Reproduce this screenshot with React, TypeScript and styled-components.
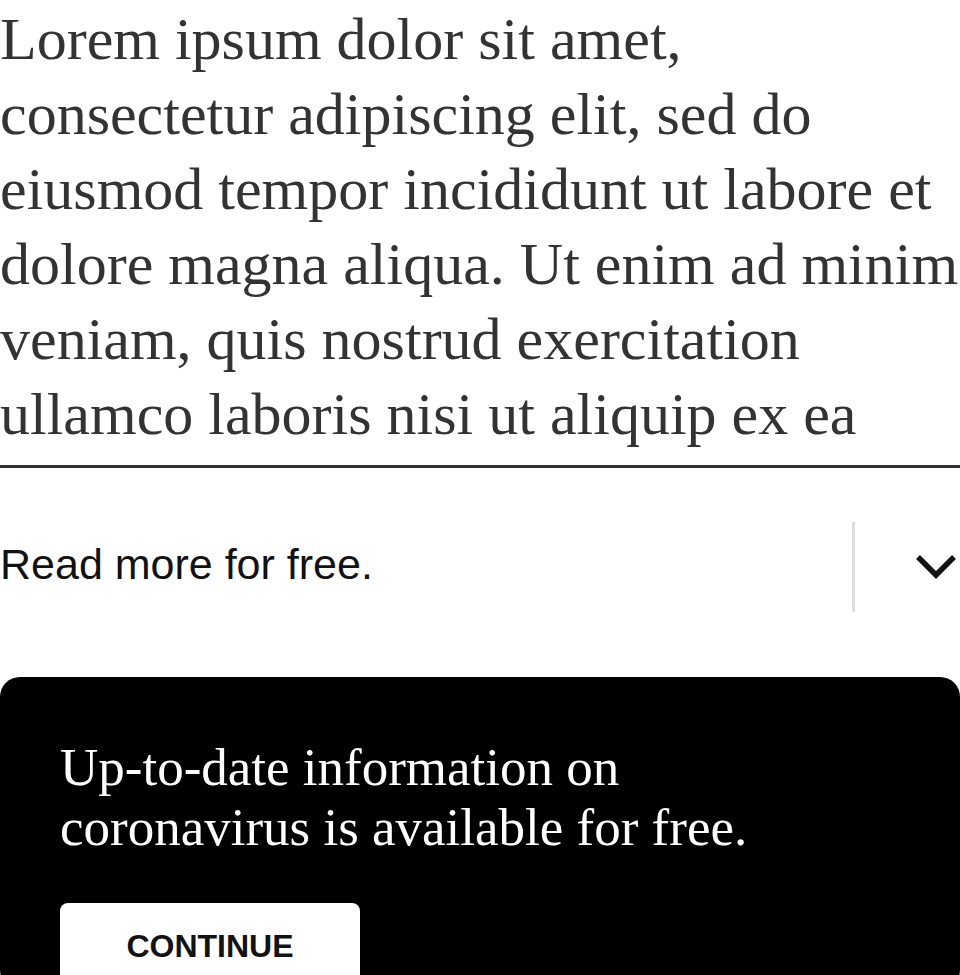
import React from 'react';
import styled, { createGlobalStyle } from 'styled-components';

const GlobalStyle = createGlobalStyle`
    html, body {
        margin: 0;
        padding: 0;
        background: #ffffff;
    }
    body {
        font-family: 'Liberation Serif', serif;
    }
`;

const Page = styled.div`
    width: 960px;
    display: flex;
    flex-direction: column;
`;

const Body = styled.p`
    margin: 2px 0 0 0;
    font-family: 'Liberation Serif', 'Times New Roman', serif;
    font-size: 60px;
    line-height: 75px;
    color: #333333;
    padding-bottom: 13px;
    border-bottom: 3px solid #333333;
`;

const ReadMoreRow = styled.div`
    display: flex;
    align-items: center;
    height: 90px;
    margin-top: 54px;
`;

const ReadMoreText = styled.span`
    flex: 1;
    font-family: 'Liberation Sans', Arial, sans-serif;
    font-size: 43px;
    color: #121212;
    margin-top: -6px;
`;

const Toggle = styled.button`
    width: 108px;
    height: 100%;
    display: flex;
    align-items: center;
    justify-content: flex-end;
    padding: 0 3px 0 0;
    background: none;
    border: none;
    border-left: 3px solid #dddddd;
    cursor: pointer;
`;

const Card = styled.section`
    margin-top: 65px;
    background: #000000;
    border-radius: 20px;
    padding: 60px 60px 0 60px;
    display: flex;
    flex-direction: column;
    align-items: flex-start;
`;

const CardTitle = styled.h2`
    margin: 0;
    font-family: 'Liberation Serif', 'Times New Roman', serif;
    font-weight: normal;
    font-size: 53px;
    line-height: 60px;
    color: #ffffff;
`;

const ContinueButton = styled.button`
    margin-top: 46px;
    width: 300px;
    padding: 25px 0;
    background: #ffffff;
    border: none;
    border-radius: 8px;
    font-family: 'Liberation Sans', Arial, sans-serif;
    font-weight: bold;
    font-size: 32px;
    color: #121212;
    cursor: pointer;
`;

function Chevron() {
    return (
        <svg width="42" height="26" viewBox="0 0 42 26" fill="none">
            <path d="M3 3 L21 21 L39 3" stroke="#121212" strokeWidth="5.5" />
        </svg>
    );
}

export default function App() {
    return (
        <Page>
            <GlobalStyle />
            <Body>
                Lorem ipsum dolor sit amet, consectetur adipiscing elit, sed do
                eiusmod tempor incididunt ut labore et dolore magna aliqua. Ut enim
                ad minim veniam, quis nostrud exercitation ullamco laboris nisi ut
                aliquip ex ea
            </Body>
            <ReadMoreRow>
                <ReadMoreText>Read more for free.</ReadMoreText>
                <Toggle aria-label="Expand">
                    <Chevron />
                </Toggle>
            </ReadMoreRow>
            <Card>
                <CardTitle>
                    Up-to-date information on
                    <br />
                    coronavirus is available for free.
                </CardTitle>
                <ContinueButton>CONTINUE</ContinueButton>
            </Card>
        </Page>
    );
}
